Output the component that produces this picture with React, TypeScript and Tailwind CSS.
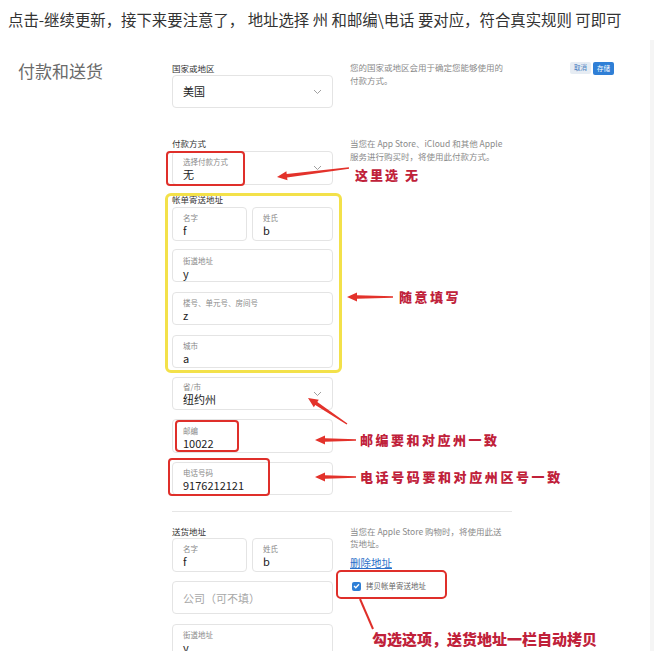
import React from 'react';

type Pt = [number, number];

// arrow polygon from tail to tip, shaft tapers toward the tail
const arrowPoints = (tip: Pt, tail: Pt, head = 10, headW = 9, shaftW = 3.5, tailW = 1.5) => {
	const dx = tip[0] - tail[0];
	const dy = tip[1] - tail[1];
	const len = Math.hypot(dx, dy);
	const ux = dx / len;
	const uy = dy / len;
	const nx = -uy;
	const ny = ux;
	const bx = tip[0] - ux * head;
	const by = tip[1] - uy * head;
	const p = (x: number, y: number) => `${x.toFixed(1)},${y.toFixed(1)}`;
	return [
		p(tail[0] + (nx * tailW) / 2, tail[1] + (ny * tailW) / 2),
		p(bx + (nx * shaftW) / 2, by + (ny * shaftW) / 2),
		p(bx + (nx * headW) / 2, by + (ny * headW) / 2),
		p(tip[0], tip[1]),
		p(bx - (nx * headW) / 2, by - (ny * headW) / 2),
		p(bx - (nx * shaftW) / 2, by - (ny * shaftW) / 2),
		p(tail[0] - (nx * tailW) / 2, tail[1] - (ny * tailW) / 2),
	].join(' ');
};

const Chevron = () => (
	<svg width="9" height="6" viewBox="0 0 9 6" className="absolute right-[10px] top-1/2 -translate-y-1/2">
		<path d="M1 1 L4.5 4.5 L8 1" fill="none" stroke="#a0a0a0" strokeWidth="1" />
	</svg>
);

type FieldProps = {
	label?: string;
	value?: string;
	placeholder?: string;
	className?: string;
	select?: boolean;
};

const Field = ({ label, value, placeholder, className = '', select }: FieldProps) => (
	<div className={`relative rounded-[4px] border border-[#e4e4e4] bg-white px-[10px] ${className}`}>
		{label && <div className="text-[7.5px] leading-[10px] text-[#8a8a8a]">{label}</div>}
		{value && <div className="text-[11px] leading-[14px] text-[#222]">{value}</div>}
		{placeholder && <div className="text-[11px] leading-[14px] text-[#a8a8a8]">{placeholder}</div>}
		{select && <Chevron />}
	</div>
);

const Note = ({ text, className }: { text: string; className: string }) => (
	<div className={`absolute whitespace-nowrap font-black text-[#c0213a] ${className}`}>{text}</div>
);

const App = () => {
	const arrows: [Pt, Pt][] = [
		[[277, 177], [349, 168]],
		[[347, 297], [393, 297]],
		[[308, 398], [347, 424]],
		[[315, 440], [356, 440]],
		[[315, 477], [356, 477]],
	];

	return (
		<div className="relative h-[651px] w-[654px] overflow-hidden bg-white font-['Noto_Sans_CJK_SC',sans-serif]">
			{/* instruction line */}
			<div className="flex h-[40px] items-center pl-[8px] text-[15.4px] text-[#333]">
				点击-继续更新，接下来要注意了， 地址选择 州 和邮编\电话 要对应，符合真实规则 可即可
			</div>

			<div className="flex h-[611px]">
				<div className="w-[650px]">
					{/* country */}
					<div className="flex pt-[19px]">
						<div className="w-[172px] pl-[18px] text-[17px] leading-[24px] text-[#6a6a6a]">付款和送货</div>
						<div className="w-[161px] pt-[3px]">
							<div className="text-[8.5px] leading-[12px] text-[#333]">国家或地区</div>
							<div className="relative mt-[1px] flex h-[33px] items-center rounded-[4px] border border-[#e4e4e4] px-[10px] text-[11px] text-[#222]">
								美国
								<Chevron />
							</div>
						</div>
						<div className="ml-[17px] w-[160px] pt-[2px] text-[8.5px] leading-[13px] text-[#8a8a8a]">
							您的国家或地区会用于确定您能够使用的付款方式。
						</div>
						<div className="ml-auto mr-[36px] flex gap-[2px] pt-[3px]">
							<div className="flex h-[12px] w-[21px] items-center justify-center rounded-[2px] bg-[#e6ecf3] text-[6.5px] text-[#4a7fc1]">取消</div>
							<div className="flex h-[13px] w-[21px] items-center justify-center rounded-[2px] bg-[#2f7fd6] text-[6.5px] text-white">存储</div>
						</div>
					</div>

					{/* payment + billing */}
					<div className="mt-[29px] flex">
						<div className="w-[172px]" />
						<div className="w-[161px]">
							<div className="text-[8.5px] leading-[12px] text-[#333]">付款方式</div>
							<Field className="mt-[2px] h-[34px] pt-[5px]" label="选择付款方式" value="无" select />
							<div className="mt-[8px] text-[8.5px] leading-[12px] text-[#333]">帐单寄送地址</div>
							<div className="mt-[2px] flex gap-[5px]">
								<Field className="h-[34px] w-[75px] pt-[5px]" label="名字" value="f" />
								<Field className="h-[34px] flex-1 pt-[5px]" label="姓氏" value="b" />
							</div>
							<Field className="mt-[8px] h-[33px] pt-[6px]" label="街道地址" value="y" />
							<Field className="mt-[10px] h-[33px] pt-[5px]" label="楼号、单元号、房间号" value="z" />
							<Field className="mt-[10px] h-[33px] pt-[5px]" label="城市" value="a" />
							<Field className="mt-[9px] h-[33px] pt-[4px]" label="省/市" value="纽约州" select />
							<Field className="mt-[9px] h-[34px] pt-[6px]" label="邮编" value="10022" />
							<Field className="mt-[9px] h-[33px] pt-[5px]" label="电话号码" value="9176212121" />
						</div>
						<div className="ml-[17px] w-[160px] text-[8.5px] leading-[13px] text-[#8a8a8a]">
							当您在 App Store、iCloud 和其他 Apple 服务进行购买时，将使用此付款方式。
						</div>
					</div>

					<div className="ml-[172px] mt-[16px] h-px w-[340px] bg-[#e6e6e6]" />

					{/* shipping */}
					<div className="mt-[13px] flex">
						<div className="w-[172px]" />
						<div className="w-[161px]">
							<div className="text-[8.5px] leading-[12px] text-[#333]">送货地址</div>
							<div className="mt-[1px] flex gap-[5px]">
								<Field className="h-[34px] w-[75px] pt-[5px]" label="名字" value="f" />
								<Field className="h-[34px] flex-1 pt-[5px]" label="姓氏" value="b" />
							</div>
							<Field className="mt-[9px] flex h-[33px] items-center" placeholder="公司（可不填）" />
							<Field className="mt-[10px] h-[33px] pt-[5px]" label="街道地址" value="y" />
						</div>
						<div className="ml-[17px] w-[156px]">
							<div className="text-[8.5px] leading-[12px] text-[#8a8a8a]">当您在 Apple Store 购物时，将使用此送货地址。</div>
							<div className="mt-[7px] text-[10.5px] leading-[14px] text-[#2a6fc9] underline">删除地址</div>
							<div className="mt-[10px] flex items-center gap-[5px] pl-[2px]">
								<div className="flex h-[9px] w-[9px] items-center justify-center rounded-[2px] bg-[#2f7fd6]">
									<svg width="7" height="6" viewBox="0 0 7 6">
										<path d="M1 3 L2.8 4.7 L6 1.2" fill="none" stroke="#fff" strokeWidth="1.3" />
									</svg>
								</div>
								<span className="text-[7.5px] leading-[12px] text-[#666]">拷贝帐单寄送地址</span>
							</div>
						</div>
					</div>
				</div>
				<div className="flex-1 bg-[#f5f5f5]" />
			</div>

			{/* annotations */}
			<div className="absolute left-[165px] top-[193px] h-[180px] w-[177px] rounded-[6px] border-[3px] border-[#f3e14a]" />
			<div className="absolute left-[166px] top-[151px] h-[35px] w-[79px] rounded-[4px] border-2 border-[#df2f2a]" />
			<div className="absolute left-[175px] top-[420px] h-[32px] w-[64px] rounded-[4px] border-2 border-[#df2f2a]" />
			<div className="absolute left-[168px] top-[458px] h-[38px] w-[102px] rounded-[4px] border-2 border-[#df2f2a]" />
			<div className="absolute left-[336px] top-[570px] h-[29px] w-[111px] rounded-[5px] border-2 border-[#df2f2a]" />

			<svg className="pointer-events-none absolute inset-0" width="654" height="651">
				{arrows.map(([tip, tail], i) => (
					<polygon key={i} points={arrowPoints(tip, tail)} fill="#e3322b" />
				))}
				<line x1="360" y1="599" x2="373" y2="629" stroke="#df2f2a" strokeWidth="2" />
			</svg>

			<Note text="这里选 无" className="left-[355px] top-[166px] text-[13px] leading-[18px] tracking-[2px]" />
			<Note text="随意填写" className="left-[399px] top-[288px] text-[13px] leading-[18px] tracking-[2.5px]" />
			<Note text="邮编要和对应州一致" className="left-[360px] top-[431px] text-[13px] leading-[18px] tracking-[2.5px]" />
			<Note text="电话号码要和对应州区号一致" className="left-[360px] top-[468px] text-[13px] leading-[18px] tracking-[2.6px]" />
			<Note text="勾选这项，送货地址一栏自动拷贝" className="left-[372px] top-[629px] text-[15px] leading-[20px]" />
		</div>
	);
};

export default App;
